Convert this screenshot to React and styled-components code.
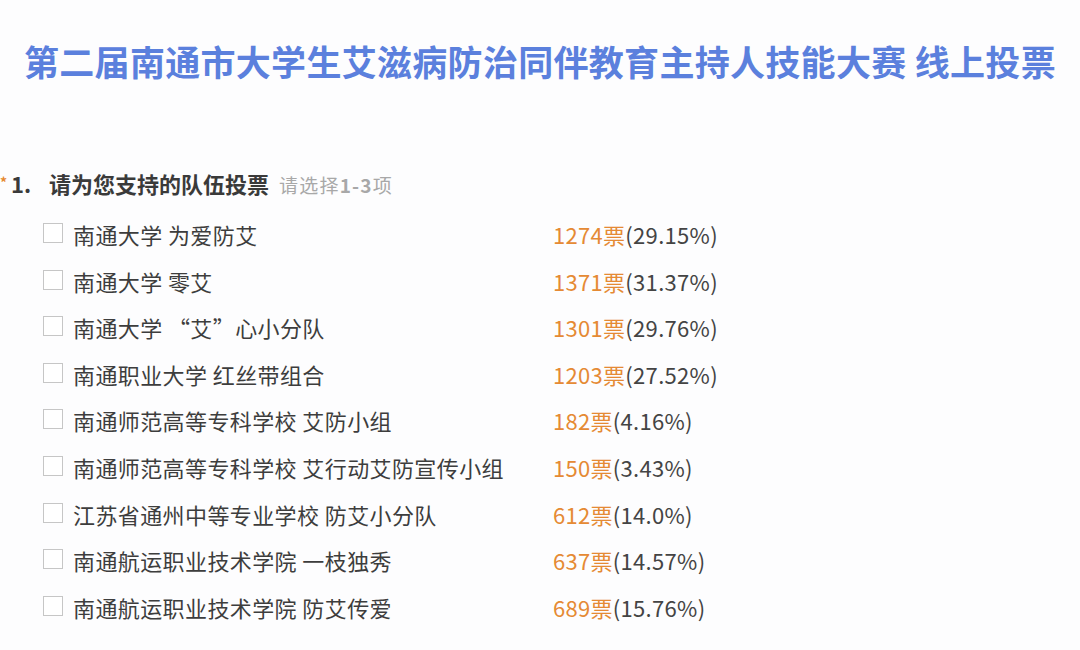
import React from "react";
import styled, { createGlobalStyle } from "styled-components";

const Global = createGlobalStyle`
  html, body { margin: 0; padding: 0; background: #fdfdfe; }
  body { font-family: "Noto Sans CJK SC", "Noto Sans", sans-serif; }
`;

const Page = styled.div`
  width: 1080px;
  height: 650px;
  overflow: hidden;
  background: #fdfdfe;
  display: flex;
  flex-direction: column;
`;

const Title = styled.h1`
  margin: 0;
  padding-top: 39px;
  height: 44px;
  line-height: 44px;
  text-align: center;
  font-size: 35px;
  font-weight: 700;
  color: #5b80dd;
  white-space: nowrap;
  letter-spacing: 0.3px;
`;

const Question = styled.div`
  margin-top: 85px;
  display: flex;
  align-items: baseline;
  height: 30px;
  line-height: 30px;
  color: #3a3a3a;
  position: relative;
`;

const Star = styled.span`
  position: absolute;
  left: 0;
  top: -1px;
  color: #e6892f;
  font-size: 14px;
  font-weight: 700;
`;

const Num = styled.span`
  width: 49px;
  padding-left: 11px;
  box-sizing: border-box;
  font-size: 22px;
  font-weight: 700;
`;

const QText = styled.span`
  font-size: 22px;
  font-weight: 700;
`;

const Hint = styled.span`
  margin-left: 10px;
  font-size: 19px;
  color: #a8a8a8;
  letter-spacing: 1.2px;
  b { font-weight: 700; }
`;

const List = styled.div`
  margin-top: 20px;
  padding-left: 43px;
  display: flex;
  flex-direction: column;
  gap: 14.6px;
`;

const Row = styled.div`
  display: grid;
  grid-template-columns: 30px 480px auto;
  align-items: center;
  height: 32px;
`;

const Box = styled.span`
  width: 20px;
  height: 20px;
  border: 1px solid #c6c6c6;
  background: #fff;
  box-sizing: border-box;
  margin-top: -2px;
`;

const Label = styled.span`
  font-size: 22px;
  letter-spacing: 0.4px;
  color: #3d3d3d;
  white-space: nowrap;
  line-height: 32px;
`;

const Votes = styled.span`
  font-size: 22px;
  letter-spacing: 0.3px;
  line-height: 32px;
  white-space: nowrap;
  color: #444;
`;

const Count = styled.span`
  color: #e58a34;
`;

const data = [
  ["南通大学 为爱防艾", "1274", "29.15%"],
  ["南通大学 零艾", "1371", "31.37%"],
  ["南通大学 “艾”心小分队", "1301", "29.76%"],
  ["南通职业大学 红丝带组合", "1203", "27.52%"],
  ["南通师范高等专科学校 艾防小组", "182", "4.16%"],
  ["南通师范高等专科学校 艾行动艾防宣传小组", "150", "3.43%"],
  ["江苏省通州中等专业学校 防艾小分队", "612", "14.0%"],
  ["南通航运职业技术学院 一枝独秀", "637", "14.57%"],
  ["南通航运职业技术学院 防艾传爱", "689", "15.76%"],
];

export default function App() {
  return (
    <Page>
      <Global />
      <Title>第二届南通市大学生艾滋病防治同伴教育主持人技能大赛 线上投票</Title>
      <Question>
        <Star>*</Star>
        <Num>1.</Num>
        <QText>请为您支持的队伍投票</QText>
        <Hint>请选择<b>1-3</b>项</Hint>
      </Question>
      <List>
        {data.map(([name, n, p]) => (
          <Row key={name}>
            <Box />
            <Label>{name}</Label>
            <Votes>
              <Count>{n}票</Count>({p})
            </Votes>
          </Row>
        ))}
      </List>
    </Page>
  );
}
